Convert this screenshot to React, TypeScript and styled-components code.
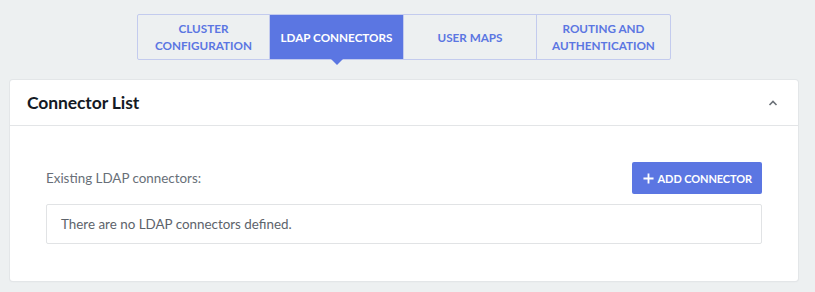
import React from "react";
import styled, { createGlobalStyle } from "styled-components";

const GlobalStyle = createGlobalStyle`
  html, body {
    margin: 0;
    padding: 0;
    background: #edf0f1;
    font-family: "Source Sans Pro", Lato, "Noto Sans", sans-serif;
  }
`;

const accent = "#5b76e2";

const Page = styled.div`
  width: 815px;
  height: 292px;
  padding: 14px 17px 0 10px;
  box-sizing: border-box;
`;

const TabBar = styled.div`
  display: flex;
  justify-content: center;
`;

const Tabs = styled.ul`
  display: flex;
  margin: 0;
  padding: 0;
  list-style: none;
  border: 1px solid #c3cbee;
  border-radius: 2px;
`;

const Tab = styled.li<{ $active?: boolean; $first?: boolean; $width: number }>`
  position: relative;
  width: ${(p) => p.$width}px;
  height: 44px;
  display: flex;
  align-items: center;
  justify-content: center;
  text-align: center;
  white-space: pre-line;
  font-size: 11.7px;
  font-weight: 700;
  line-height: 17px;
  text-transform: uppercase;
  color: ${(p) => (p.$active ? "#ffffff" : accent)};
  background: ${(p) => (p.$active ? accent : "transparent")};
  border-left: ${(p) => (p.$first ? "none" : "1px solid #c3cbee")};

  &::after {
    content: "";
    display: ${(p) => (p.$active ? "block" : "none")};
    position: absolute;
    left: 50%;
    bottom: -6px;
    margin-left: -6px;
    border-left: 6px solid transparent;
    border-right: 6px solid transparent;
    border-top: 6px solid ${accent};
  }
`;

const Card = styled.section`
  margin-top: 20px;
  background: #ffffff;
  border-radius: 3px;
  box-shadow: 0 0 0 1px #e3e6e8, 0 1px 2px rgba(0, 0, 0, 0.05);
  height: 201px;
  box-sizing: border-box;
`;

const CardHeader = styled.header`
  display: flex;
  align-items: center;
  justify-content: space-between;
  height: 45px;
  padding: 0 20px 0 17px;
  border-bottom: 1px solid #e3e5e7;
`;

const Title = styled.h2`
  margin: 0;
  font-size: 17.5px;
  font-weight: 700;
  color: #141a24;
  letter-spacing: -0.1px;
`;

const CardBody = styled.div`
  padding: 36px 36px 0 36px;
`;

const Toolbar = styled.div`
  display: flex;
  align-items: center;
  justify-content: space-between;
  margin-bottom: 10px;
`;

const Label = styled.span`
  font-size: 13.4px;
  color: #686f78;
`;

const AddButton = styled.button`
  display: flex;
  align-items: center;
  gap: 4px;
  height: 32px;
  padding: 0 10px 0 11px;
  border: none;
  border-radius: 2px;
  background: ${accent};
  color: #ffffff;
  font-family: inherit;
  font-size: 11px;
  font-weight: 700;
  letter-spacing: -0.1px;
  text-transform: uppercase;
  cursor: pointer;
`;

const EmptyBox = styled.div`
  height: 40px;
  display: flex;
  align-items: center;
  padding: 0 14px;
  border: 1px solid #e1e3e5;
  border-radius: 2px;
  font-size: 13.4px;
  color: #5d636b;
  box-sizing: border-box;
`;

const tabs = [
  { label: "Cluster\nConfiguration", width: 131 },
  { label: "LDAP Connectors", width: 133, active: true },
  { label: "User Maps", width: 132 },
  { label: "Routing and\nAuthentication", width: 133 },
];

export default function App() {
  return (
    <>
      <GlobalStyle />
      <Page>
        <TabBar>
          <Tabs>
            {tabs.map((t, i) => (
              <Tab key={t.label} $active={t.active} $width={t.width} $first={i === 0}>
                {t.label}
              </Tab>
            ))}
          </Tabs>
        </TabBar>
        <Card>
          <CardHeader>
            <Title>Connector List</Title>
            <svg width="10" height="6" viewBox="0 0 10 6">
              <path d="M1.5 5 L5 1.5 L8.5 5" fill="none" stroke="#6b7178" strokeWidth="1.6" />
            </svg>
          </CardHeader>
          <CardBody>
            <Toolbar>
              <Label>Existing LDAP connectors:</Label>
              <AddButton>
                <svg width="11" height="11" viewBox="0 0 12 12">
                  <path d="M6 0.5 V11.5 M0.5 6 H11.5" stroke="#fff" strokeWidth="2" />
                </svg>
                Add Connector
              </AddButton>
            </Toolbar>
            <EmptyBox>There are no LDAP connectors defined.</EmptyBox>
          </CardBody>
        </Card>
      </Page>
    </>
  );
}
